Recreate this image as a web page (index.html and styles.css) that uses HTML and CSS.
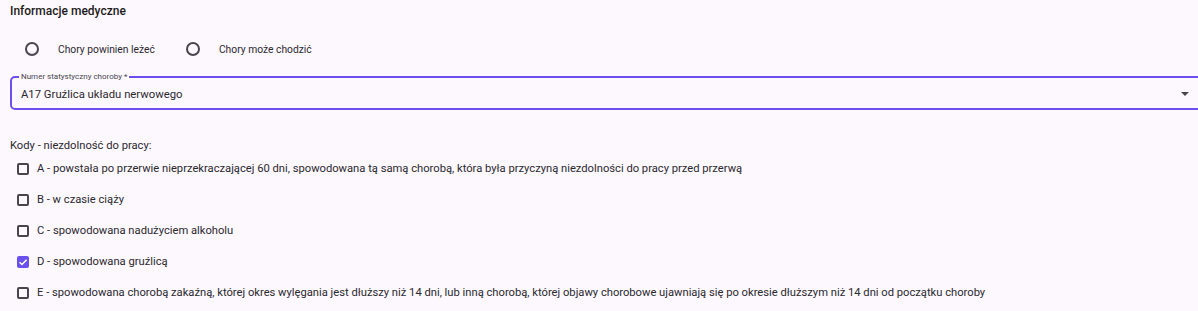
FILE: index.html
```html
<!DOCTYPE html>
<html lang="pl">
<head>
<meta charset="utf-8">
<title>Informacje medyczne</title>
<link rel="stylesheet" href="styles.css">
</head>
<body>
<section class="panel">
  <h2 class="title">Informacje medyczne</h2>
  <div class="radios">
    <label class="radio"><span class="radio-circle"></span><span class="radio-label">Chory powinien leżeć</span></label>
    <label class="radio"><span class="radio-circle"></span><span class="radio-label">Chory może chodzić</span></label>
  </div>
  <fieldset class="field">
    <legend class="field-legend">Numer statystyczny choroby *</legend>
    <div class="field-row">
      <span class="field-value">A17 Gruźlica układu nerwowego</span>
      <span class="field-arrow"></span>
    </div>
  </fieldset>
  <div class="codes-title">Kody - niezdolność do pracy:</div>
  <ul class="codes">
    <li class="code"><span class="box"></span><span class="code-text">A - powstała po przerwie nieprzekraczającej 60 dni, spowodowana tą samą chorobą, która była przyczyną niezdolności do pracy przed przerwą</span></li>
    <li class="code"><span class="box"></span><span class="code-text">B - w czasie ciąży</span></li>
    <li class="code"><span class="box"></span><span class="code-text">C - spowodowana nadużyciem alkoholu</span></li>
    <li class="code"><span class="box box-checked"><svg viewBox="0 0 12 12" width="12" height="12"><path d="M2.6 6.2 L5 8.5 L9.6 3.7" fill="none" stroke="#fff" stroke-width="1.5"/></svg></span><span class="code-text">D - spowodowana gruźlicą</span></li>
    <li class="code"><span class="box"></span><span class="code-text">E - spowodowana chorobą zakaźną, której okres wylęgania jest dłuższy niż 14 dni, lub inną chorobą, której objawy chorobowe ujawniają się po okresie dłuższym niż 14 dni od początku choroby</span></li>
  </ul>
</section>
</body>
</html>
```
FILE: styles.css
```css
html, body {
  margin: 0;
  padding: 0;
  background: #fdf8fd;
  overflow: hidden;
}
body {
  font-family: Roboto, "Liberation Sans", sans-serif;
  color: #1d1b20;
  width: 1198px;
  height: 311px;
}
.panel {
  padding: 3px 0 0 10px;
}
.title {
  margin: 0;
  font-size: 12px;
  font-weight: 500;
  line-height: 16px;
  color: #1d1b20;
}
.radios {
  display: flex;
  align-items: center;
  height: 26px;
  margin-top: 17px;
  padding-left: 15px;
}
.radio {
  display: flex;
  align-items: center;
}
.radio + .radio {
  margin-left: 31px;
}
.radio-circle {
  width: 14px;
  height: 14px;
  box-sizing: border-box;
  border: 2px solid #49454f;
  border-radius: 50%;
}
.radio-label {
  margin-left: 19px;
  font-size: 10.3px;
  color: #2b2930;
}
.field {
  margin: 11px -14px 0 0;
  padding: 0 10px 0 9px;
  border: 2px solid #6a50ee;
  border-radius: 5px;
  height: 37px;
  box-sizing: border-box;
  min-width: 0;
}
.field-legend {
  font-size: 8px;
  line-height: 8px;
  color: #49454f;
  padding: 0 2px;
  margin-left: -2px;
}
.field-row {
  display: flex;
  align-items: center;
  height: 24px;
  margin-top: 1px;
}
.field-value {
  flex: 1;
  font-size: 11.3px;
  color: #2b2930;
}
.field-arrow {
  width: 0;
  height: 0;
  border-left: 4px solid transparent;
  border-right: 4px solid transparent;
  border-top: 4px solid #49454f;
  margin-right: 11px;
}
.codes-title {
  margin-top: 29px;
  font-size: 11.2px;
  line-height: 14px;
  color: #2b2930;
}
.codes {
  list-style: none;
  margin: 0;
  padding: 0 0 0 7px;
}
.code {
  display: flex;
  align-items: center;
  height: 31px;
}
.box {
  width: 12px;
  height: 12px;
  box-sizing: border-box;
  border: 2px solid #49454f;
  border-radius: 2px;
  flex: none;
  display: flex;
  align-items: center;
  justify-content: center;
}
.box-checked {
  background: #6a50ee;
  border-color: #6a50ee;
}
.box-checked svg {
  flex: none;
}
.code-text {
  margin-left: 8px;
  font-size: 11.2px;
  color: #2b2930;
  white-space: nowrap;
}
```
